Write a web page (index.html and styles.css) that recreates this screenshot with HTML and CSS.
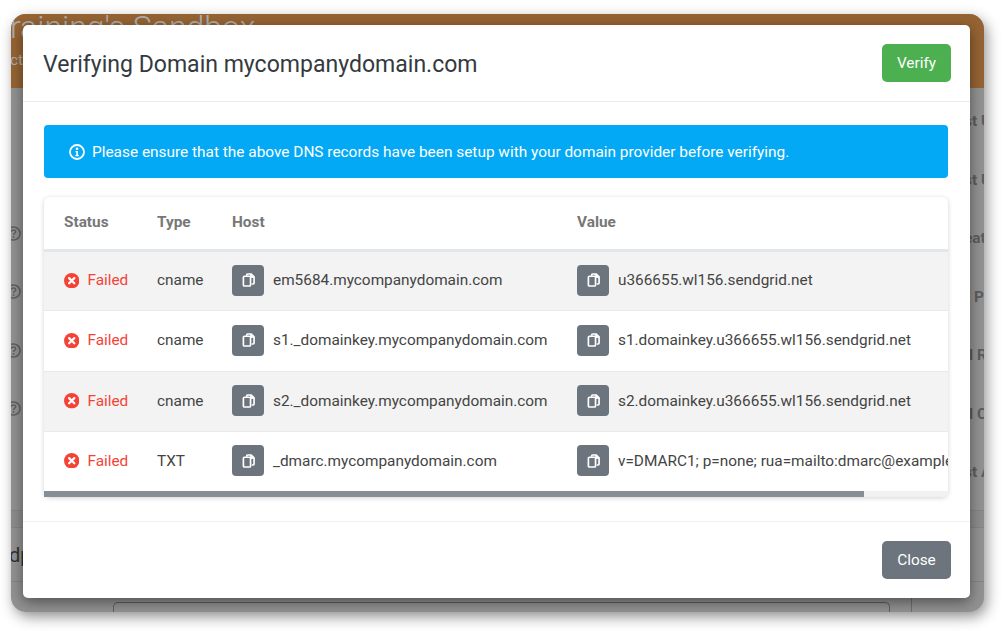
FILE: index.html
```html
<!DOCTYPE html>
<html lang="en">
<head>
<meta charset="utf-8">
<title>Verifying Domain</title>
<link rel="stylesheet" href="styles.css">
</head>
<body>
<svg class="sprites" width="0" height="0" aria-hidden="true">
  <symbol id="copy" viewBox="0 0 14 15">
    <path d="M5 3V2c0-.6.4-1 1-1h3.7L13 4.2v6.6c0 .6-.4 1-1 1h-1.5" fill="none" stroke="currentColor" stroke-width="1.8" stroke-linejoin="round"/>
    <path d="M9.2 1v3.8H13z" fill="currentColor" stroke="currentColor" stroke-width=".8" stroke-linejoin="round"/>
    <rect x="1.5" y="3.5" width="7.7" height="10.5" rx="1.1" fill="none" stroke="currentColor" stroke-width="1.8"/>
  </symbol>
  <symbol id="fail" viewBox="0 0 16 16">
    <circle cx="8" cy="8" r="8" fill="currentColor"/>
    <path d="M5.3 5.3l5.4 5.4M10.7 5.3l-5.4 5.4" stroke="#fff" stroke-width="2.3" stroke-linecap="round"/>
  </symbol>
  <symbol id="info" viewBox="0 0 16 16">
    <circle cx="8" cy="8" r="7" fill="none" stroke="currentColor" stroke-width="1.8"/>
    <circle cx="8" cy="4.8" r="1.3" fill="currentColor"/>
    <path d="M6.5 7h2.4v4.1h1v1.2H6.3v-1.2h1V8.2h-.8z" fill="currentColor"/>
  </symbol>
  <symbol id="help" viewBox="0 0 16 16">
    <circle cx="8" cy="8" r="7" fill="none" stroke="currentColor" stroke-width="1.6"/>
    <path d="M5.7 6.2C5.8 4.9 6.8 4.2 8 4.2c1.3 0 2.3.8 2.3 2 0 1.7-2.3 1.6-2.3 3.4" fill="none" stroke="currentColor" stroke-width="1.6"/>
    <circle cx="8" cy="11.7" r="1" fill="currentColor"/>
  </symbol>
</svg>

<div class="frame">
  <header class="brand">
    <div class="brand-title">Training's Sandbox</div>
    <div class="brand-sub">Actions</div>
  </header>
  <div class="bg-rows">
    <div class="bg-row"><span></span><b class="bg-label">st U</b></div>
    <div class="bg-row"><span></span><b class="bg-label">st U</b></div>
    <div class="bg-row"><svg class="bg-help"><use href="#help"/></svg><b class="bg-label">eat</b></div>
    <div class="bg-row"><svg class="bg-help"><use href="#help"/></svg><b class="bg-label bg-label-p">P</b></div>
    <div class="bg-row"><svg class="bg-help"><use href="#help"/></svg><b class="bg-label bg-label-l">l R</b></div>
    <div class="bg-row"><svg class="bg-help"><use href="#help"/></svg><b class="bg-label bg-label-l">l C</b></div>
    <div class="bg-row"><span></span><b class="bg-label">st A</b></div>
  </div>
  <div class="bg-footer">
    <div class="bg-strip"></div>
    <div class="bg-word">dp</div>
    <div class="bg-bottom"><div class="bg-input"></div></div>
  </div>

  <section class="modal" role="dialog" aria-label="Verifying Domain">
    <div class="modal-header">
      <h1 class="modal-title">Verifying Domain mycompanydomain.com</h1>
      <button class="btn btn-green" type="button">Verify</button>
    </div>
    <div class="modal-body">
      <div class="alert">
        <svg class="alert-icon"><use href="#info"/></svg>
        <span>Please ensure that the above DNS records have been setup with your domain provider before verifying.</span>
      </div>
      <div class="card">
        <div class="table-clip">
          <table class="records">
            <colgroup>
              <col class="col-status"><col class="col-type"><col class="col-host"><col class="col-value">
            </colgroup>
            <thead>
              <tr><th>Status</th><th>Type</th><th>Host</th><th>Value</th></tr>
            </thead>
            <tbody>
              <tr>
                <td><span class="failed"><svg class="fail-icon"><use href="#fail"/></svg>Failed</span></td>
                <td>cname</td>
                <td><span class="copy-cell"><button class="copy" type="button"><svg class="copy-icon"><use href="#copy"/></svg></button>em5684.mycompanydomain.com</span></td>
                <td><span class="copy-cell"><button class="copy" type="button"><svg class="copy-icon"><use href="#copy"/></svg></button>u366655.wl156.sendgrid.net</span></td>
              </tr>
              <tr>
                <td><span class="failed"><svg class="fail-icon"><use href="#fail"/></svg>Failed</span></td>
                <td>cname</td>
                <td><span class="copy-cell"><button class="copy" type="button"><svg class="copy-icon"><use href="#copy"/></svg></button>s1._domainkey.mycompanydomain.com</span></td>
                <td><span class="copy-cell"><button class="copy" type="button"><svg class="copy-icon"><use href="#copy"/></svg></button>s1.domainkey.u366655.wl156.sendgrid.net</span></td>
              </tr>
              <tr>
                <td><span class="failed"><svg class="fail-icon"><use href="#fail"/></svg>Failed</span></td>
                <td>cname</td>
                <td><span class="copy-cell"><button class="copy" type="button"><svg class="copy-icon"><use href="#copy"/></svg></button>s2._domainkey.mycompanydomain.com</span></td>
                <td><span class="copy-cell"><button class="copy" type="button"><svg class="copy-icon"><use href="#copy"/></svg></button>s2.domainkey.u366655.wl156.sendgrid.net</span></td>
              </tr>
              <tr>
                <td><span class="failed"><svg class="fail-icon"><use href="#fail"/></svg>Failed</span></td>
                <td>TXT</td>
                <td><span class="copy-cell"><button class="copy" type="button"><svg class="copy-icon"><use href="#copy"/></svg></button>_dmarc.mycompanydomain.com</span></td>
                <td><span class="copy-cell"><button class="copy" type="button"><svg class="copy-icon"><use href="#copy"/></svg></button>v=DMARC1; p=none; rua=mailto:dmarc@example.com</span></td>
              </tr>
            </tbody>
          </table>
        </div>
        <div class="scrollbar"><div class="scroll-thumb"></div></div>
      </div>
    </div>
    <div class="modal-footer">
      <button class="btn btn-gray" type="button">Close</button>
    </div>
  </section>
</div>
</body>
</html>
```

FILE: styles.css
```css
* { box-sizing: border-box; }
html, body { height: 100%; }
body {
  margin: 0;
  padding: 14px 20px 19px 11px;
  background: #fff;
  font-family: Roboto, "Liberation Sans", sans-serif;
  overflow: hidden;
}
.sprites { display: block; height: 0; }

.frame {
  position: relative;
  height: 598px;
  display: flex;
  flex-direction: column;
  border-radius: 15px;
  background: #929292;
  box-shadow: 3px 5px 14px rgba(0, 0, 0, .42);
}

.brand {
  height: 74px;
  flex: none;
  background: #966433;
  border-radius: 15px 15px 0 0;
  overflow: hidden;
  color: #aeaeae;
}
.brand-title {
  margin: -6px 0 0 -19px;
  font-size: 32px;
  line-height: 38px;
  font-weight: 300;
  white-space: nowrap;
}
.brand-sub {
  margin: 5px 0 0 -11px;
  font-size: 15.36px;
  line-height: 18px;
  white-space: nowrap;
}

.bg-rows { padding-top: 4px; flex: none; overflow: hidden; }
.bg-row {
  height: 58.5px;
  display: flex;
  justify-content: space-between;
  align-items: center;
}
.bg-help {
  width: 15px;
  height: 15px;
  margin: -10px 0 0 -5px;
  color: #606060;
}
.bg-label {
  width: 20px;
  overflow: hidden;
  white-space: nowrap;
  font-size: 15.36px;
  color: #5c5c5c;
  font-weight: 700;
}
.bg-label-p { padding-left: 10px; }
.bg-label-l { padding-left: 5px; }

.bg-footer {
  flex: 1;
  margin-top: 8.5px;
  border-top: 1px solid #858585;
  display: flex;
  flex-direction: column;
  border-radius: 0 0 15px 15px;
  overflow: hidden;
}
.bg-strip { height: 17px; flex: none; border-bottom: 1px solid #858585; background: #8d8d8d; }
.bg-word {
  height: 54px;
  flex: none;
  font-size: 20px;
  line-height: 54px;
  color: #333;
  text-indent: -2px;
  white-space: nowrap;
  overflow: hidden;
  border-bottom: 1px solid #858585;
}
.bg-bottom {
  flex: 1;
  margin-right: 72px;
  padding: 20px 21px 0 102px;
  border-right: 1px solid #707070;
}
.bg-input { height: 20px; border: 1px solid #5f5f5f; border-bottom: 0; border-radius: 5px 5px 0 0; }

.modal {
  position: absolute;
  left: 12px;
  top: 11px;
  width: 947px;
  height: 573px;
  display: flex;
  flex-direction: column;
  background: #fff;
  border-radius: 5px;
  box-shadow: 0 4px 14px rgba(0, 0, 0, .45);
}
.modal-header {
  height: 77px;
  flex: none;
  display: flex;
  align-items: center;
  justify-content: space-between;
  padding: 0 19px 0 20px;
  border-bottom: 1px solid #e9ecef;
}
.modal-title {
  margin: 3px 0 0;
  font-size: 23.04px;
  font-weight: 400;
  color: #343a40;
}
.btn {
  width: 69px;
  height: 38.4px;
  border: 0;
  border-radius: 5px;
  color: #fff;
  font-family: inherit;
  font-size: 15.36px;
}
.btn-green { background: #4caf50; }
.btn-gray { background: #6c757d; }

.modal-body { flex: 1; padding: 23px 22px 0 21px; }
.alert {
  height: 53px;
  display: flex;
  align-items: center;
  gap: 7px;
  padding-left: 25px;
  background: #03a9f4;
  border-radius: 4px;
  color: #fff;
  font-size: 15.4px;
  font-weight: 400;
}
.alert-icon { width: 16px; height: 16px; flex: none; }

.card {
  margin-top: 19px;
  height: 300px;
  display: flex;
  flex-direction: column;
  background: #fff;
  border-radius: 6px;
  box-shadow: 0 1px 5px rgba(0, 0, 0, .18);
}
.table-clip { flex: 1; overflow: hidden; border-radius: 6px 6px 0 0; }
.records {
  width: 997px;
  table-layout: fixed;
  border-collapse: collapse;
  font-size: 15.36px;
  color: #444;
}
.col-status { width: 93px; }
.col-type { width: 75px; }
.col-host { width: 345px; }
.col-value { width: 484px; }
.records th {
  height: 53px;
  padding: 0 0 1px 20px;
  text-align: left;
  font-weight: 700;
  color: #777;
  border-bottom: 3px solid #e4e7ea;
}
.records td {
  height: 60.6px;
  padding: 0 0 1px 20px;
  border-bottom: 1px solid #e9e9e9;
  white-space: nowrap;
}
.records tbody tr:nth-child(odd) td { background: #f3f3f3; }
.records tbody tr:last-child td { border-bottom: 0; height: 58px; }
.failed {
  display: flex;
  align-items: center;
  gap: 8px;
  color: #f44336;
}
.fail-icon { width: 15.4px; height: 15.4px; flex: none; }
.copy-cell { display: flex; align-items: center; gap: 9px; }
.copy {
  width: 32px;
  height: 31px;
  flex: none;
  padding: 0;
  border: 0;
  border-radius: 4px;
  background: #6c757d;
  color: #fff;
  display: flex;
  align-items: center;
  justify-content: center;
}
.copy-icon { width: 13px; height: 14px; }

.scrollbar { height: 6px; flex: none; background: #f1f1f1; border-radius: 0 0 4px 4px; }
.scroll-thumb { width: 820px; height: 100%; background: #868e96; }

.modal-footer {
  height: 77px;
  flex: none;
  display: flex;
  align-items: center;
  justify-content: flex-end;
  padding: 0 19px;
  border-top: 1px solid #f0f0f0;
}
```
